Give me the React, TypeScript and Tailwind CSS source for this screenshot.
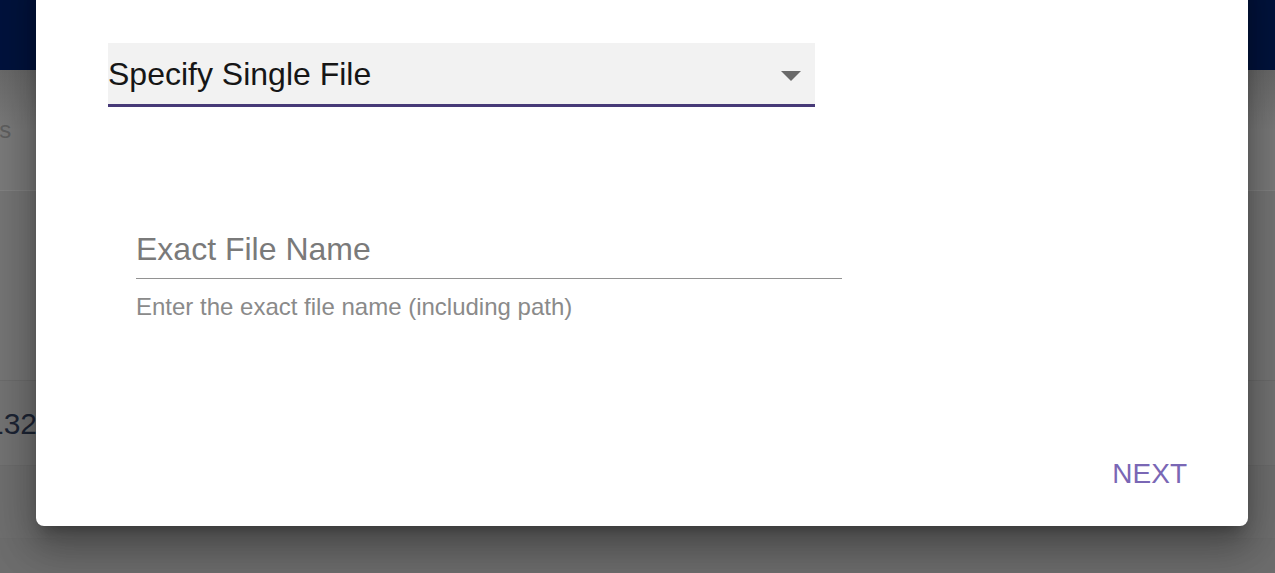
import React from 'react';

const font = { fontFamily: '"Liberation Sans", Arial, sans-serif' };

function BackgroundPage() {
	return (
		<div className="flex h-[573px] w-[1275px] flex-col bg-[#767676]" style={font}>
			<div className="h-[70px] bg-[#00133d]" />
			<div className="h-[120px] bg-gradient-to-b from-[#6a6a6a] via-[#7a7a7a] to-[#7a7a7a] to-30% flex items-center">
				<span className="-ml-[62px] text-[24px] text-[#5f5f5f]">Details</span>
			</div>
			<div className="h-[190px] border-t border-[#828282] bg-[#757575]" />
			<div className="flex h-[85px] items-center border-t border-[#6c6c6c] bg-[#737373]">
				<span className="-ml-[13px] text-[30px] text-[#1c2433]">1324</span>
			</div>
			<div className="h-[73px] border-t border-[#6c6c6c] bg-[#6f6f6f]" />
			<div className="flex-1 border-t border-[#6c6c6c] bg-[#6d6d6d]" />
		</div>
	);
}

function SelectField() {
	return (
		<div className="flex h-[64px] w-[707px] items-start justify-between border-b-[3px] border-[#473a78] bg-[#f2f2f2] pt-[15px] pr-[14px]">
			<span className="text-[32px] leading-[32px] text-[#161616]">Specify Single File</span>
			<svg width="20" height="10" viewBox="0 0 20 10" className="mt-[13px]">
				<path d="M0 0 L20 0 L10 10 Z" fill="#6a6a6a" />
			</svg>
		</div>
	);
}

function FileNameField() {
	return (
		<div className="ml-[28px] mt-[126px] w-[706px]">
			<div className="border-b border-[#929292] pb-[13px] text-[32px] leading-[32px] text-[#7a7a7a]">Exact File Name</div>
			<div className="mt-[16px] text-[24px] leading-[24px] text-[#8a8a8a]">Enter the exact file name (including path)</div>
		</div>
	);
}

export default function App() {
	return (
		<div className="relative h-[573px] w-[1275px] overflow-hidden" style={font}>
			<BackgroundPage />
			<div className="absolute left-[36px] top-[-40px] flex w-[1212px] flex-col rounded-[8px] bg-white pt-[83px] pb-[38px] pl-[72px] pr-[61px] shadow-[0_11px_15px_-7px_rgba(0,0,0,0.3),0_24px_38px_3px_rgba(0,0,0,0.2),0_9px_46px_8px_rgba(0,0,0,0.16)]">
				<SelectField />
				<FileNameField />
				<div className="mt-[141px] flex justify-end">
					<button className="text-[28px] leading-[28px] text-[#7a67b5]">NEXT</button>
				</div>
			</div>
		</div>
	);
}
